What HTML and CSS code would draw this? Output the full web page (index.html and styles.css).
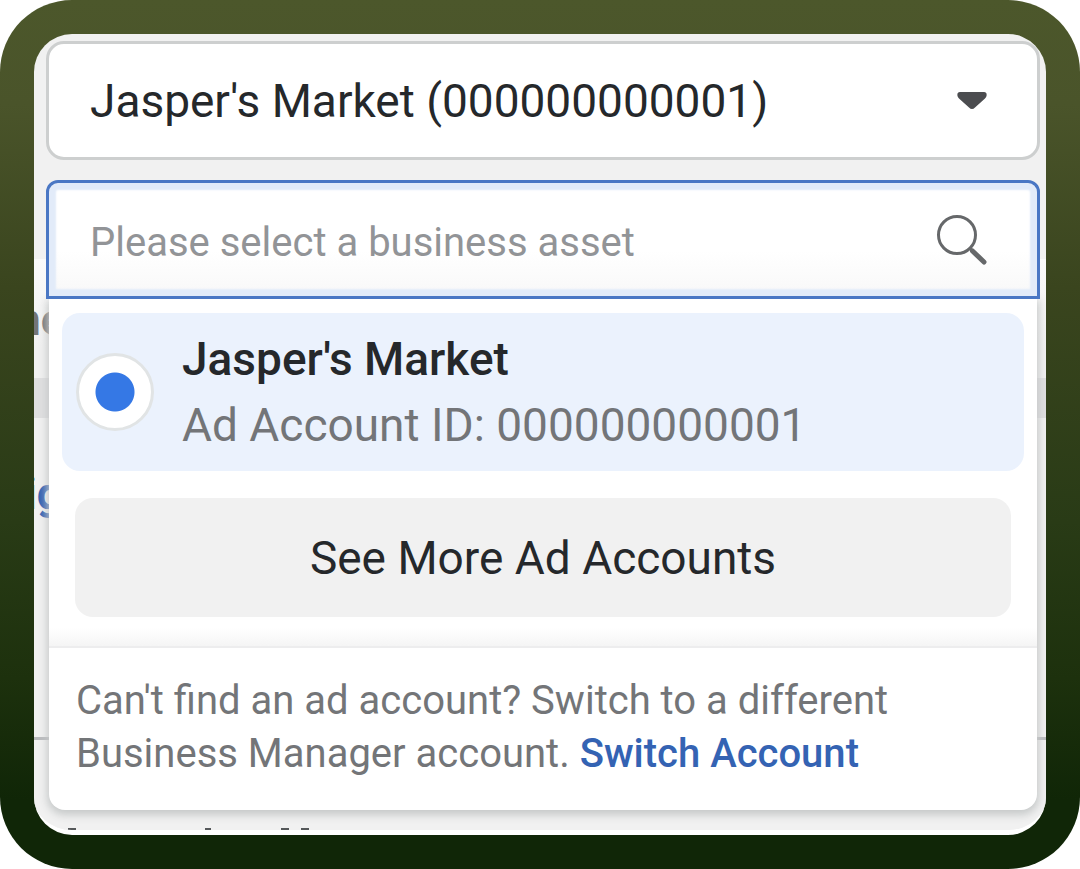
FILE: index.html
```html
<!DOCTYPE html>
<html lang="en">
<head>
<meta charset="utf-8">
<meta name="viewport" content="width=device-width, initial-scale=1">
<title>Select an ad account</title>
<link rel="stylesheet" href="styles.css">
</head>
<body>
<main class="frame">
  <div class="screen">
    <div class="backdrop" aria-hidden="true">
      <div class="backdrop-sheet"></div>
      <div class="backdrop-field"></div>
      <div class="backdrop-rule"></div>
      <span class="backdrop-label">ne</span>
      <span class="backdrop-link">ig</span>
      <svg class="backdrop-tops" viewBox="0 0 250 2"><path d="M0 1H8M137 1H143M213 1H221M233 1H241"/></svg>
    </div>
    <form class="picker">
      <div class="account">
        <select class="account-select" aria-label="Ad account">
          <option>Jasper's Market (000000000001)</option>
        </select>
        <svg class="caret" viewBox="0 0 30 19" aria-hidden="true"><path d="M3 1H27Q30 1 29.600 4.500Q29.500 6 28 7.500L18 16.500Q15 19.500 12 16.500L2 7.500Q.5 6 .4 4.500Q0 1 3 1Z"/></svg>
      </div>
      <div class="search">
        <input class="search-input" type="text" aria-label="Search business assets" placeholder="Please select a business asset">
        <svg class="search-icon" viewBox="0 0 52 52" aria-hidden="true"><circle cx="21" cy="21" r="18.500"/><path class="neck" d="M34 34.500L37 37.500"/><path class="handle" d="M36.500 37L48 48"/></svg>
      </div>
      <div class="menu">
        <div class="results">
          <label class="option">
            <input class="option-radio" type="radio" name="account" checked>
            <span class="option-text">
              <span class="option-name">Jasper's Market</span>
              <span class="option-id">Ad Account ID: 000000000001</span>
            </span>
          </label>
          <button class="more" type="button">See More Ad Accounts</button>
        </div>
        <p class="help">Can't find an ad account? Switch to a different Business Manager account. <a class="switch" href="#">Switch Account</a></p>
      </div>
    </form>
  </div>
</main>
</body>
</html>
```
FILE: styles.css
```css
* {
  box-sizing: border-box;
}

body {
  margin: 0;
  background: #fff;
  color: #25282b;
  font-family: Roboto, "Liberation Sans", sans-serif;
}

.frame {
  padding: 34px;
  border-radius: 72px;
  background: linear-gradient(#4c572b 0%, #4a542a 12%, #3a451e 33%, #293b16 60%, #1d310d 78%, #102607 92%, #102607 100%);
}

.screen {
  position: relative;
  overflow: hidden;
  border-radius: 38px;
  background: #f1f1f1;
  border-bottom: 5px solid #fff;
}

.picker {
  position: relative;
  padding: 7px 6px 20px 12px;
}

.account,
.search {
  position: relative;
}

.account {
  margin-bottom: 20px;
}

.account-select,
.search-input {
  display: block;
  width: 100%;
  height: 119px;
  padding: 0 110px 0 41px;
  appearance: none;
  font-family: inherit;
  outline: none;
}

.account-select {
  border: 3px solid #cdcfcf;
  border-radius: 18px;
  background: #fff;
  color: inherit;
  font-size: 46px;
}

.caret {
  position: absolute;
  right: 53px;
  top: 50px;
  width: 30px;
  height: 19px;
  fill: #4b4c4f;
}

.search-input {
  padding-top: 6px;
  border: 3px solid #4a77c4;
  border-radius: 12px 12px 0 0;
  background: linear-gradient(#fff 60%, #f8f8f8);
  box-shadow: inset 0 0 2px 7px #e2ebf9;
  color: inherit;
  font-size: 40px;
}

.search-input::placeholder {
  color: #929497;
  opacity: 1;
}

.search-icon {
  position: absolute;
  right: 52px;
  top: 34px;
  width: 52px;
  height: 52px;
  fill: none;
  stroke: #66686a;
  stroke-width: 3;
  stroke-linecap: round;
}

.search-icon .handle {
  stroke-width: 5;
}

.menu {
  margin: 0 3px;
  overflow: hidden;
  border-radius: 0 0 16px 16px;
  background: #fff;
  box-shadow: 0 3px 8px 2px #c6c9c9;
}

.results {
  display: grid;
  gap: 27px;
  padding: 14px 13px 29px;
  background: linear-gradient(to top, #f5f5f5, #fff 18px);
  border-bottom: 2px solid #ededee;
}

.option {
  display: flex;
  align-items: center;
  gap: 28px;
  height: 158px;
  padding: 0 14px;
  border-radius: 18px;
  background: #ebf2fd;
}

.option-radio {
  flex: none;
  width: 78px;
  height: 78px;
  margin: 0;
  appearance: none;
  border: 3px solid #e1e4e5;
  border-radius: 50%;
  background: radial-gradient(circle, #3578e5 19px, #fff 20px);
}

.option-text {
  display: grid;
}

.option-name,
.option-id {
  font-size: 46px;
  line-height: 66px;
}

.option-name {
  font-weight: 500;
}

.option-id {
  color: #737578;
}

.more {
  height: 119px;
  margin: 0 13px;
  padding: 0;
  border: 0;
  border-radius: 18px;
  background: #f1f1f1;
  color: inherit;
  font-family: inherit;
  font-size: 46px;
}

.help {
  margin: 0;
  padding: 26px 100px 30px 27px;
  color: #737578;
  font-size: 40px;
  line-height: 53px;
}

.switch {
  color: #3463b3;
  font-weight: 500;
  text-decoration: none;
}

.backdrop > * {
  position: absolute;
}

.backdrop-sheet {
  top: 225px;
  right: 0;
  bottom: 0;
  left: 0;
  background: linear-gradient(#fafafa, #f1f1f1 90px);
}

.backdrop-field {
  top: 344px;
  right: 0;
  left: 0;
  height: 40px;
  background: #dfdfe0;
}

.backdrop-rule {
  top: 703px;
  right: 0;
  left: 0;
  height: 3px;
  background: #b9babd;
}

.backdrop-label,
.backdrop-link {
  font-size: 44px;
  font-weight: 700;
  line-height: 52px;
}

.backdrop-label {
  top: 260px;
  left: -18px;
  color: #737578;
}

.backdrop-link {
  top: 434px;
  left: -9px;
  color: #3463b3;
}

.backdrop-tops {
  bottom: 0;
  left: 34px;
  width: 250px;
  height: 2px;
  fill: none;
  stroke: #55585a;
  stroke-width: 2;
}
```
